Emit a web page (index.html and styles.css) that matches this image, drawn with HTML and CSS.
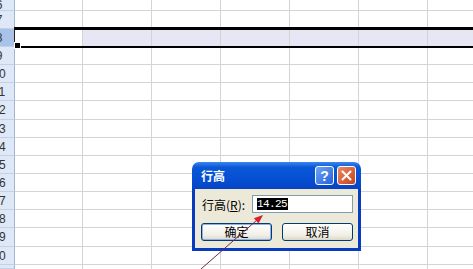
FILE: index.html
```html
<!DOCTYPE html>
<html lang="zh-CN">
<head>
    <meta charset="UTF-8">
    <meta name="viewport" content="width=device-width, initial-scale=1.0">
    <title>行高</title>
    <link rel="stylesheet" href="styles.css">
</head>

<body>
    <div class="sheet" id="sheet"></div>

    <!-- seleção da linha 8 -->
    <div class="selection"></div>
    <div class="fill-handle"></div>

    <div class="dialog">
        <div class="titlebar">
            <span class="title">行高</span>
            <div class="title-buttons">
                <span class="tb-btn help">?</span>
                <span class="tb-btn close">
                    <svg width="11" height="11" viewBox="0 0 11 11"><path d="M1.5 1.5 L9.5 9.5 M9.5 1.5 L1.5 9.5" stroke="#fff" stroke-width="2" stroke-linecap="round"/></svg>
                </span>
            </div>
        </div>
        <div class="dialog-body">
            <div class="field-row">
                <label class="field-label">行高(<u>R</u>):</label>
                <div class="field-input"><span class="sel-text">14.25</span></div>
            </div>
            <div class="button-row">
                <button class="xp-btn default">确定</button>
                <button class="xp-btn">取消</button>
            </div>
        </div>
    </div>

    <svg class="arrow" width="473" height="269" viewBox="0 0 473 269">
        <line x1="201" y1="269" x2="257" y2="220" stroke="#6e2a48" stroke-width="1"/>
        <polygon points="263,215 258.5,223.5 253.9,218.3" fill="#d4202c"/>
    </svg>

    <script>
        // Linhas visíveis da planilha (6 a 21); a 21 fica quase toda fora da tela
        const sheet = document.getElementById('sheet');
        for (let r = 6; r <= 21; r++) {
            const head = document.createElement('div');
            head.className = 'row-head' + (r === 8 ? ' active' : '');
            if (r <= 20) head.innerHTML = `<span>${r}</span>`;
            sheet.appendChild(head);
            for (let c = 0; c < 7; c++) {
                const cell = document.createElement('div');
                cell.className = 'cell' + (r === 8 && c > 0 ? ' picked' : '');
                sheet.appendChild(cell);
            }
        }
    </script>
</body>
</html>
```

FILE: styles.css
```css
/* Página */
body {
    margin: 0;
    width: 473px;
    height: 269px;
    overflow: hidden;
    position: relative;
    background: #ffffff;
    font-family: "Noto Sans CJK SC", "Liberation Sans", sans-serif;
}

/* Grade da planilha */
.sheet {
    display: grid;
    height: 269px;
    overflow: hidden;
    grid-template-columns: 15px 68px repeat(5, 69px) 1fr;
    grid-template-rows: 11px 18px 18px 18px 18px 18px 19px 18px 18px 18px 18px 18px 18px 19px 18px 1fr;
}

.cell {
    box-sizing: border-box;
    border-right: 1px solid #d4d4d4;
    border-bottom: 1px solid #d4d4d4;
}

.cell:nth-child(8n) {
    border-right: none;
}

.cell:nth-last-child(-n+8) {
    border-bottom: none;
}

.cell.picked {
    background-color: #e6e6f4;
}

/* Cabeçalho das linhas (cortado à esquerda) */
.row-head {
    box-sizing: border-box;
    overflow: hidden;
    background-color: #dfe8f6;
    border-right: 1px solid #9fb5d2;
    border-bottom: 1px solid #c2d1e6;
    display: flex;
    align-items: center;
    font-family: "Liberation Sans", sans-serif;
    font-size: 12px;
    color: #333;
}

.row-head span {
    flex: none;
    width: 30px;
    margin-left: -16px;
    text-align: center;
}

.row-head.active {
    background-color: #a9c3e8;
}

/* Seleção */
.selection {
    position: absolute;
    left: 14px;
    right: 0;
    top: 27px;
    height: 16px;
    border-top: 3px solid #000;
    border-bottom: 2px solid #000;
    border-left: 1px solid #222;
}

.fill-handle {
    position: absolute;
    left: 14px;
    top: 42px;
    width: 5px;
    height: 5px;
    background: #000;
    border: 1px solid #fff;
}

/* Caixa de diálogo */
.dialog {
    position: absolute;
    left: 192px;
    top: 162px;
    width: 169px;
}

.titlebar {
    height: 27px;
    border-radius: 7px 7px 0 0;
    background: linear-gradient(#3a86f0 0%, #0a58d6 20%, #054dd2 70%, #0843c2 100%);
    display: flex;
    align-items: center;
    justify-content: space-between;
    padding: 0 5px 0 9px;
}

.title {
    color: #fff;
    font-size: 12px;
    font-weight: bold;
}

.title-buttons {
    display: flex;
    gap: 3px;
}

.tb-btn {
    box-sizing: border-box;
    width: 19px;
    height: 19px;
    border: 1px solid #fff;
    border-radius: 3px;
    display: flex;
    align-items: center;
    justify-content: center;
    color: #fff;
    font-family: "Liberation Sans", sans-serif;
    font-weight: bold;
    font-size: 14px;
}

.tb-btn.help {
    background: linear-gradient(135deg, #6fa4f5, #2462d8);
}

.tb-btn.close {
    background: linear-gradient(135deg, #e88a66, #c8421c);
}

.dialog-body {
    background-color: #ece9d8;
    border: 3px solid #083cc0;
    border-top: none;
    padding: 6px 5px 7px 7px;
}

.field-row {
    display: flex;
    align-items: center;
    justify-content: space-between;
}

.field-label {
    font-size: 12px;
    color: #000;
}

.field-input {
    box-sizing: border-box;
    width: 101px;
    height: 18px;
    background: #fff;
    border: 1px solid #7f9db9;
    display: flex;
    align-items: center;
    padding-left: 4px;
}

.sel-text {
    background: #000;
    color: #fff;
    font-family: "Liberation Mono", monospace;
    font-size: 11px;
    letter-spacing: -0.6px;
    line-height: 12px;
    padding-right: 1px;
}

.button-row {
    display: flex;
    gap: 10px;
    margin-top: 10px;
    margin-left: -1px;
}

.xp-btn {
    width: 71px;
    height: 18px;
    padding: 0;
    font-family: "Noto Sans CJK SC", sans-serif;
    font-size: 12px;
    line-height: 14px;
    color: #000;
    background: linear-gradient(#ffffff, #f1efe6 70%, #dcd8c8);
    border: 1px solid #003c74;
    border-radius: 3px;
}

.xp-btn.default {
    box-shadow: inset 0 0 0 1px #8fb0e8;
}

/* Seta de anotação */
.arrow {
    position: absolute;
    left: 0;
    top: 0;
    pointer-events: none;
}
```
